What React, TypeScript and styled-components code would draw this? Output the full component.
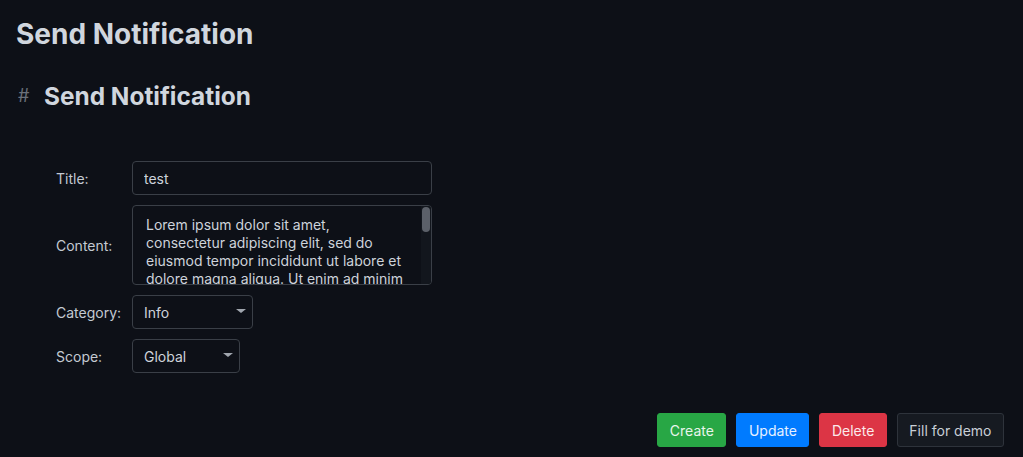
import React, { useState } from "react";
import styled, { createGlobalStyle } from "styled-components";

const Global = createGlobalStyle`
  html, body { margin: 0; padding: 0; background: #0d1017; }
  body { font-family: Inter, "Noto Sans", sans-serif; color: #cdd3db; }
  * { box-sizing: border-box; }
`;

const Page = styled.div`
  min-height: 457px;
  padding: 17px 19px 10px 16px;
  display: flex;
  flex-direction: column;
`;

const Title = styled.h1`
  margin: 0;
  font-size: 28px;
  line-height: 34px;
  font-weight: 700;
  color: #d0d6de;
`;

const Heading = styled.h2`
  margin: 30px 0 0 0;
  display: flex;
  align-items: center;
  font-size: 24.4px;
  line-height: 30px;
  font-weight: 700;
  color: #d0d6de;
`;

const Hash = styled.span`
  width: 28px;
  padding-left: 2px;
  font-size: 18px;
  font-weight: 400;
  color: #6b717b;
`;

const Form = styled.div`
  margin: 50px 0 0 40px;
  display: grid;
  grid-template-columns: 76px auto;
  row-gap: 10px;
  align-items: center;
  justify-items: start;
`;

const Label = styled.label`
  font-size: 14px;
  color: #c4cad2;
`;

const Input = styled.input`
  width: 300px;
  height: 34px;
  padding: 0 11px;
  background: #0d1017;
  border: 1px solid #3a3f47;
  border-radius: 4px;
  color: #cdd3db;
  font: 14px Inter, sans-serif;
  outline: none;
`;

const AreaWrap = styled.div`
  position: relative;
  width: 300px;
  height: 80px;
`;

const TextArea = styled.textarea`
  display: block;
  width: 300px;
  height: 80px;
  padding: 10px 21px 0 13px;
  background: #0d1017;
  border: 1px solid #3a3f47;
  border-radius: 4px;
  color: #cdd3db;
  font: 14px/18px Inter, sans-serif;
  resize: none;
  outline: none;
  overflow-y: hidden;
`;

const Track = styled.div`
  position: absolute;
  top: 1px;
  right: 1px;
  bottom: 1px;
  width: 10px;
  background: #12161d;
  border-radius: 0 3px 3px 0;
`;

const Thumb = styled.div`
  position: absolute;
  top: 1px;
  left: 1px;
  width: 8px;
  height: 25px;
  background: #5b6069;
  border-radius: 4px;
`;

const SelectWrap = styled.div<{ $w: number }>`
  position: relative;
  width: ${(p) => p.$w}px;
`;

const Select = styled.select`
  appearance: none;
  width: 100%;
  height: 34px;
  padding: 0 11px;
  background: #0d1017;
  border: 1px solid #3a3f47;
  border-radius: 4px;
  color: #cdd3db;
  font: 14px Inter, sans-serif;
  outline: none;
`;

const Caret = styled.span`
  position: absolute;
  right: 7px;
  top: 14px;
  width: 0;
  height: 0;
  border-left: 5px solid transparent;
  border-right: 5px solid transparent;
  border-top: 4px solid #a0a6ae;
  pointer-events: none;
`;

const Actions = styled.div`
  margin-top: 40px;
  display: flex;
  justify-content: flex-end;
  gap: 10px;
`;

const variants: Record<string, { bg: string; border: string; color: string }> = {
  green: { bg: "#28a745", border: "#28a745", color: "#e8f5ec" },
  blue: { bg: "#007bff", border: "#007bff", color: "#e6f0ff" },
  red: { bg: "#dc3545", border: "#dc3545", color: "#fbe9eb" },
  dark: { bg: "#161a21", border: "#2e333b", color: "#c9cfd7" },
};

const Button = styled.button<{ $v: string }>`
  height: 34px;
  padding: 0 11.5px;
  border-radius: 3px;
  font: 14px Inter, sans-serif;
  cursor: pointer;
  background: ${(p) => variants[p.$v].bg};
  border: 1px solid ${(p) => variants[p.$v].border};
  color: ${(p) => variants[p.$v].color};
`;

const lorem =
  "Lorem ipsum dolor sit amet, consectetur adipiscing elit, sed do eiusmod tempor incididunt ut labore et dolore magna aliqua. Ut enim ad minim veniam, quis nostrud exercitation ullamco laboris nisi ut aliquip ex ea commodo consequat. Duis aute irure dolor in reprehenderit in voluptate velit esse cillum dolore eu fugiat nulla pariatur.";

export default function App() {
  const [title, setTitle] = useState("test");
  const [content, setContent] = useState(lorem);
  const [category, setCategory] = useState("info");
  const [scope, setScope] = useState("global");
  return (
    <>
      <Global />
      <Page>
        <Title>Send Notification</Title>
        <Heading>
          <Hash>#</Hash>
          Send Notification
        </Heading>
        <Form>
          <Label>Title:</Label>
          <Input value={title} onChange={(e) => setTitle(e.target.value)} />
          <Label>Content:</Label>
          <AreaWrap>
            <TextArea value={content} onChange={(e) => setContent(e.target.value)} />
            <Track>
              <Thumb />
            </Track>
          </AreaWrap>
          <Label>Category:</Label>
          <SelectWrap $w={121}>
            <Select value={category} onChange={(e) => setCategory(e.target.value)}>
              <option value="info">Info</option>
              <option value="warning">Warning</option>
              <option value="error">Error</option>
            </Select>
            <Caret />
          </SelectWrap>
          <Label>Scope:</Label>
          <SelectWrap $w={108}>
            <Select value={scope} onChange={(e) => setScope(e.target.value)}>
              <option value="global">Global</option>
              <option value="user">User</option>
            </Select>
            <Caret />
          </SelectWrap>
        </Form>
        <Actions>
          <Button $v="green">Create</Button>
          <Button $v="blue">Update</Button>
          <Button $v="red">Delete</Button>
          <Button $v="dark">Fill for demo</Button>
        </Actions>
      </Page>
    </>
  );
}
